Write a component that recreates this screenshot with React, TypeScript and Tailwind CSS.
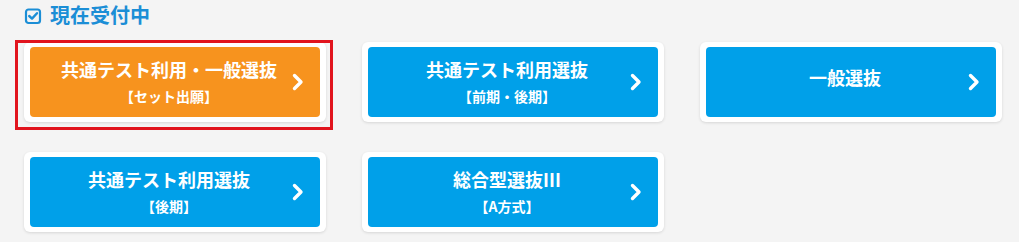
import React from "react";

const font = { fontFamily: '"Noto Sans CJK JP", "Noto Sans", sans-serif' };

function Chevron() {
  return (
    <svg width="12" height="18" viewBox="0 0 12 18" className="mr-[16px] shrink-0">
      <path d="M2.5 2.5 L9 9 L2.5 15.5" fill="none" stroke="white" strokeWidth="3.4" strokeLinecap="round" strokeLinejoin="round" />
    </svg>
  );
}

type CardProps = { l1: string; l2?: string; orange?: boolean };

function Card({ l1, l2, orange }: CardProps) {
  return (
    <div className="bg-white rounded-[6px] px-[6px] py-[5px] shadow-[0_1px_3px_rgba(0,0,0,0.12)]">
      <div className={`${orange ? "bg-[#f7931e]" : "bg-[#00a0e9]"} h-[70px] rounded-[4px] flex items-center text-white font-bold`}>
        <div className={`flex-1 text-center pl-[16px] ${l2 ? "pt-[1px]" : "mb-[9px]"}`}>
          <div className="text-[18px] leading-[27px]">{l1}</div>
          {l2 && <div className="text-[14px] leading-[27px]">{l2}</div>}
        </div>
        <Chevron />
      </div>
    </div>
  );
}

export default function App() {
  return (
    <div className="w-[1019px] h-[242px] bg-[#f4f4f4] relative overflow-hidden" style={font}>
      <div className="h-[30px] flex items-center pl-[24px] gap-[8px]">
        <svg width="18" height="18" viewBox="0 0 18 18" className="mt-[1px]">
          <rect x="2" y="2.5" width="14" height="13.5" rx="2.5" fill="none" stroke="#1b8ed6" strokeWidth="2.2" />
          <path d="M5.2 9 L8 11.6 L13 6.2" fill="none" stroke="#1b8ed6" strokeWidth="2.4" strokeLinecap="round" strokeLinejoin="round" />
        </svg>
        <span className="text-[20px] font-bold text-[#1b8ed6] leading-[30px]">現在受付中</span>
      </div>
      <div className="mt-[12px] pl-[24px] grid grid-cols-[302px_302px_302px] gap-x-[36px] gap-y-[30px]">
        <Card l1="共通テスト利用・一般選抜" l2="【セット出願】" orange />
        <Card l1="共通テスト利用選抜" l2="【前期・後期】" />
        <Card l1="一般選抜" />
        <Card l1="共通テスト利用選抜" l2="【後期】" />
        <Card l1="総合型選抜III" l2="【A方式】" />
      </div>
      <div className="absolute left-[15px] top-[40px] w-[318px] h-[90px] border-[3px] border-[#e1141d] pointer-events-none" />
    </div>
  );
}
